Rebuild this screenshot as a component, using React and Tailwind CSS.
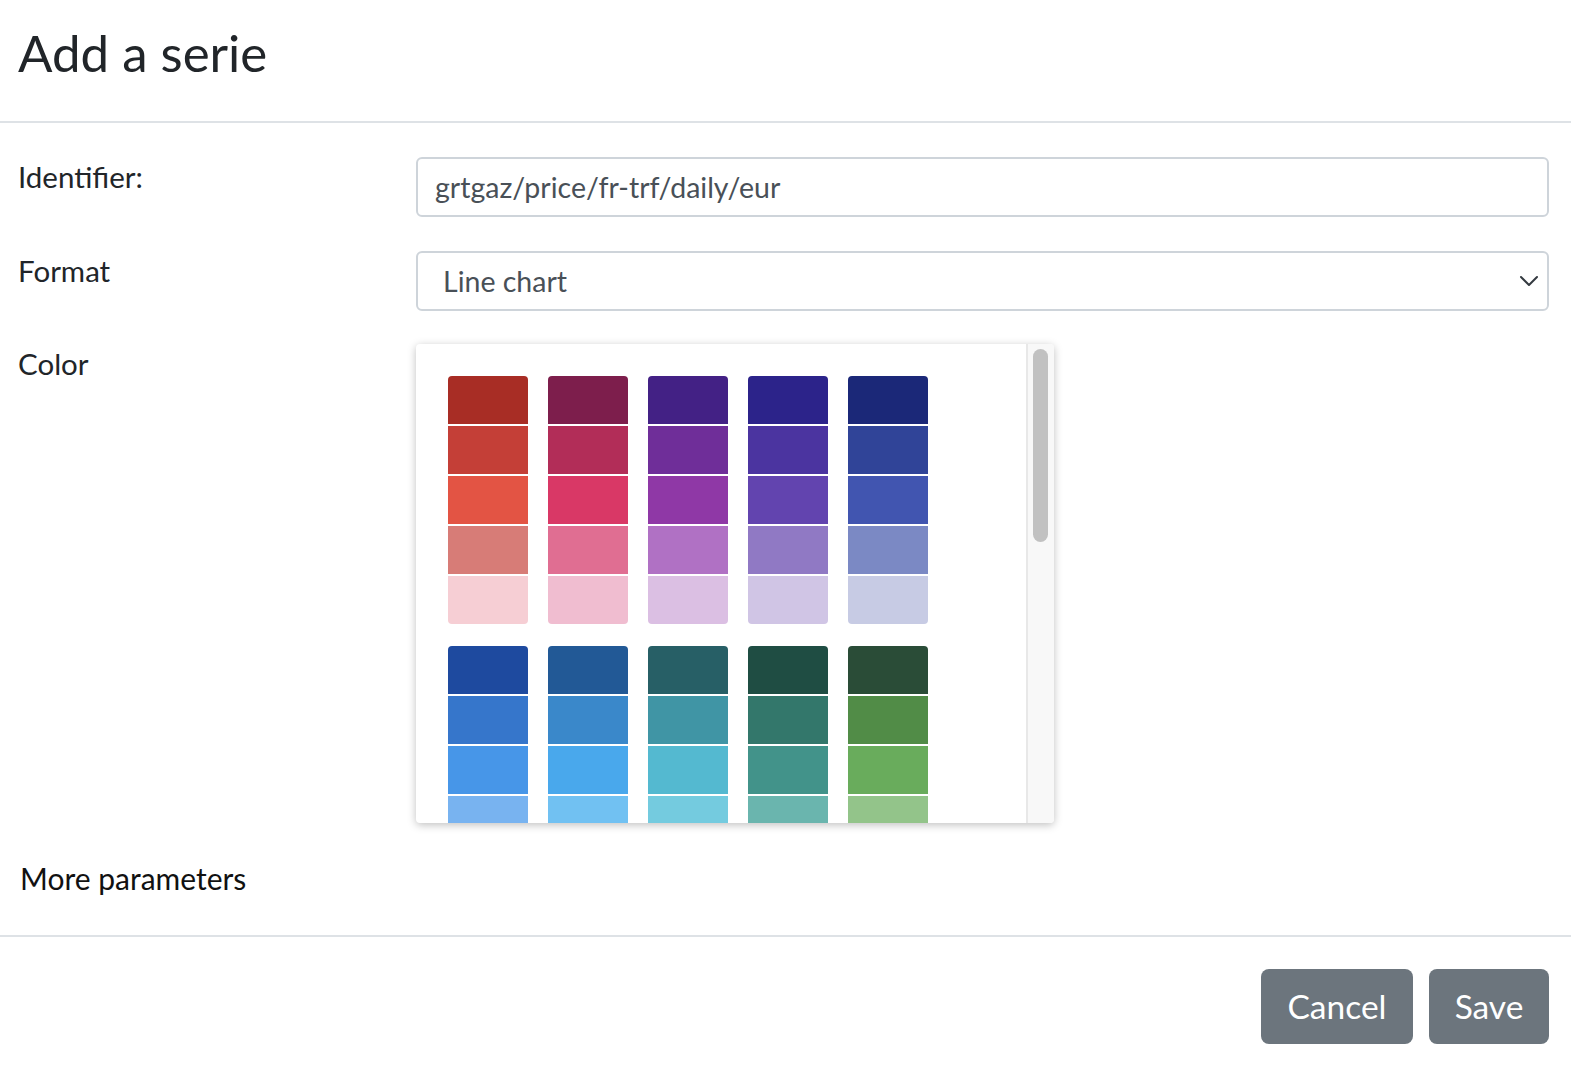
import React from "react";

const groups = [
  [
    ["#a82d25", "#7d1e4c", "#432185", "#2c238a", "#1b2878"],
    ["#c43f37", "#b22d58", "#6f2e99", "#4b34a0", "#304498"],
    ["#e35444", "#d93866", "#8f38a6", "#6244af", "#4155b0"],
    ["#d77c77", "#e06e92", "#b071c4", "#9079c4", "#7b89c4"],
    ["#f6ced4", "#f0bdd0", "#dbbfe3", "#d0c5e5", "#c7cbe4"],
  ],
  [
    ["#1e4a9f", "#225996", "#275f66", "#1f4d43", "#2a4c37"],
    ["#3676cb", "#3a88ca", "#4095a5", "#33776b", "#518c47"],
    ["#4796e8", "#49a8ec", "#54b9d0", "#42938a", "#69ac5c"],
    ["#78b3f0", "#71c1f2", "#74cbdf", "#6ab5ae", "#93c48a"],
    ["#a9d0f6", "#a3d8f8", "#a6e0ec", "#a0d2cd", "#bcdcb4"],
  ],
];

function Swatches() {
  return (
    <div className="flex flex-col gap-[22px] pl-[32px] pt-[32px]">
      {groups.map((rows, gi) => (
        <div key={gi} className="flex gap-[20px]">
          {[0, 1, 2, 3, 4].map((ci) => (
            <div key={ci} className="flex flex-col gap-[2px] w-[80px] rounded-[4px] overflow-hidden">
              {rows.map((row, ri) => (
                <div key={ri} className="h-[48px] w-[80px]" style={{ backgroundColor: row[ci] }} />
              ))}
            </div>
          ))}
        </div>
      ))}
    </div>
  );
}

export default function App() {
  return (
    <div className="w-[1571px] h-[1068px] bg-white text-[#212529]" style={{ fontFamily: "Lato, 'Noto Sans', sans-serif" }}>
      <div className="h-[123px] border-b-2 border-[#dee2e6] flex items-center pl-[18px] pb-[16px]">
        <h1 className="text-[51px] leading-none font-normal">Add a serie</h1>
      </div>

      <div className="pt-[34px] pl-[18px] pr-[22px]">
        <div className="flex">
          <label className="w-[398px] text-[29.5px] leading-[42px] mt-[-1px]">Identifier:</label>
          <div className="flex-1 h-[60px] border-2 border-[#ced4da] rounded-[6px] flex items-center pl-[17px] text-[28.5px] text-[#495057]">
            grtgaz/price/fr-trf/daily/eur
          </div>
        </div>

        <div className="flex mt-[34px]">
          <label className="w-[398px] text-[29.5px] leading-[42px] mt-[-1px]">Format</label>
          <div className="flex-1 h-[60px] border-2 border-[#ced4da] rounded-[6px] flex items-center justify-between pl-[25px] pr-[8px] text-[28.5px] text-[#495057]">
            <span>Line chart</span>
            <svg width="20" height="12" viewBox="0 0 20 12" fill="none" stroke="#343a40" strokeWidth="2" strokeLinecap="round" strokeLinejoin="round">
              <path d="M2 2l8 8 8-8" />
            </svg>
          </div>
        </div>

        <div className="flex mt-[33px]">
          <label className="w-[398px] text-[29.5px] leading-[42px] mt-[-1px]">Color</label>
          <div className="w-[638px] h-[479px] flex rounded-[4px] bg-white shadow-[0_2px_8px_rgba(0,0,0,0.25)] overflow-hidden">
            <div className="flex-1 overflow-hidden">
              <Swatches />
            </div>
            <div className="w-[28px] bg-[#f8f8f8] border-l-2 border-[#e8e8e8] pt-[5px] pl-[5px]">
              <div className="w-[15px] h-[193px] rounded-full bg-[#c1c1c1]" />
            </div>
          </div>
        </div>

        <div className="mt-[34px] pl-[2px] text-[30px] leading-[42px] text-[#111]">More parameters</div>
      </div>

      <div className="mt-[36px] border-t-2 border-[#dee2e6] flex justify-end gap-[16px] pt-[32px] pr-[22px]">
        <button className="w-[152px] h-[75px] rounded-[8px] bg-[#6c757d] text-white text-[33.5px]">Cancel</button>
        <button className="w-[120px] h-[75px] rounded-[8px] bg-[#6c757d] text-white text-[33.5px]">Save</button>
      </div>
    </div>
  );
}
